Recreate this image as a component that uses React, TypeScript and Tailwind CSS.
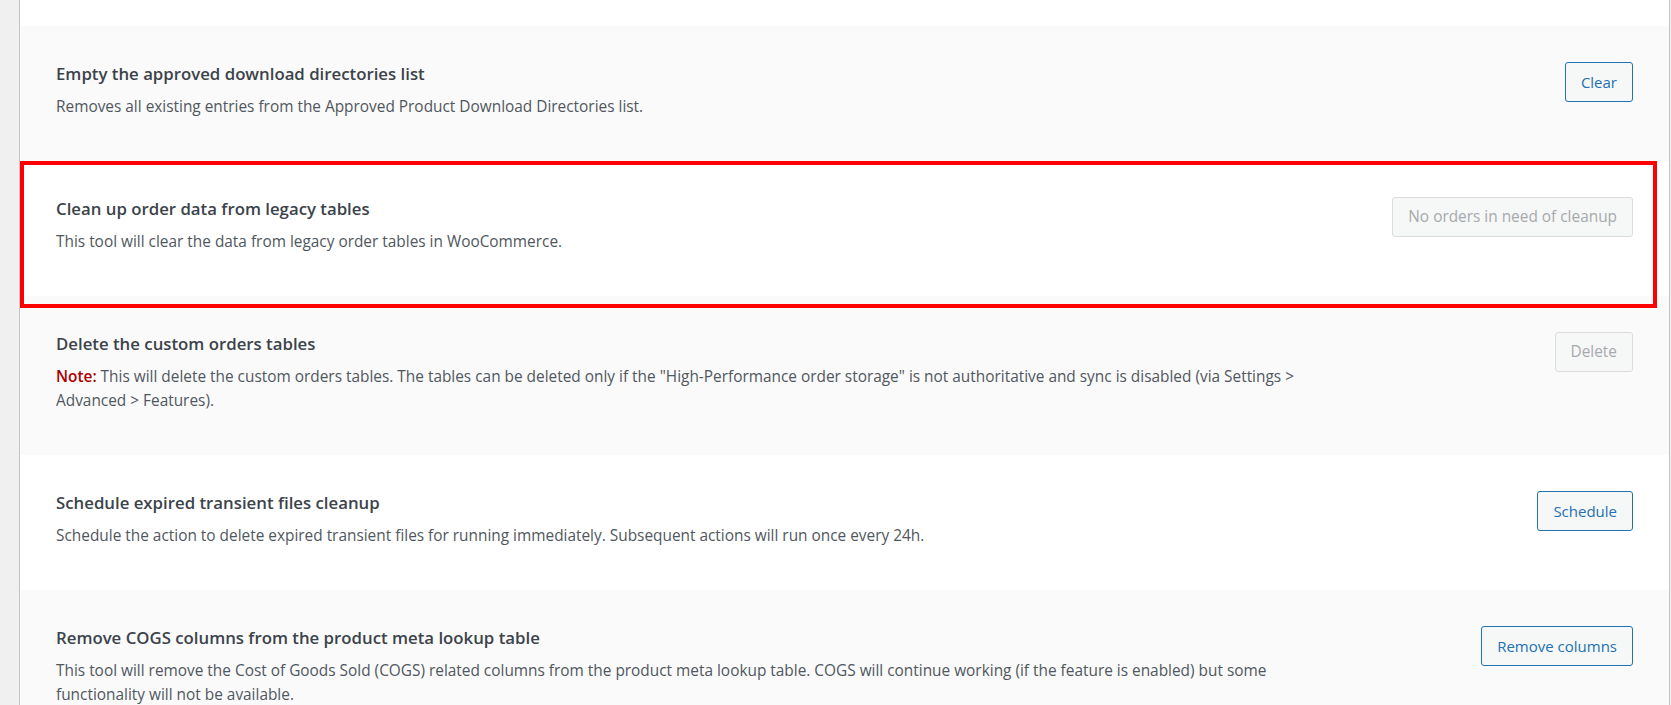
import React from 'react'

type Tool = {
  title: string
  description: React.ReactNode
  button: string
  disabled?: boolean
}

const tools: Tool[] = [
  {
    title: 'Empty the approved download directories list',
    description: 'Removes all existing entries from the Approved Product Download Directories list.',
    button: 'Clear',
  },
  {
    title: 'Clean up order data from legacy tables',
    description: 'This tool will clear the data from legacy order tables in WooCommerce.',
    button: 'No orders in need of cleanup',
    disabled: true,
  },
  {
    title: 'Delete the custom orders tables',
    description: (
      <>
        <span className="font-semibold text-[#a00]">Note:</span> This will delete the custom orders tables. The
        tables can be deleted only if the "High-Performance order storage" is not authoritative and sync is
        disabled (via Settings &gt; Advanced &gt; Features).
      </>
    ),
    button: 'Delete',
    disabled: true,
  },
  {
    title: 'Schedule expired transient files cleanup',
    description:
      'Schedule the action to delete expired transient files for running immediately. Subsequent actions will run once every 24h.',
    button: 'Schedule',
  },
  {
    title: 'Remove COGS columns from the product meta lookup table',
    description:
      'This tool will remove the Cost of Goods Sold (COGS) related columns from the product meta lookup table. COGS will continue working (if the feature is enabled) but some functionality will not be available.',
    button: 'Remove columns',
  },
]

function ToolRow({ tool, striped }: { tool: Tool; striped: boolean }) {
  return (
    <div className={`flex items-start px-[36px] pt-[36px] pb-[42px] ${striped ? 'bg-[#fafafa]' : 'bg-white'}`}>
      <div className="w-[1250px] shrink-0">
        <div className="text-[16.8px] leading-[24px] font-semibold text-[#3c434a]">{tool.title}</div>
        <p className="mt-[9px] text-[15.4px] leading-[24px] text-[#50575e]">{tool.description}</p>
      </div>
      <div className="flex-1 flex justify-end">
        {tool.disabled ? (
          <button
            disabled
            className="h-[40px] px-[15px] rounded-[3px] border border-[#dcdcde] bg-[#f6f7f7] text-[15.4px] text-[#a7aaad] whitespace-nowrap"
          >
            {tool.button}
          </button>
        ) : (
          <button className="h-[40px] px-[15px] rounded-[3px] border border-[#2271b1] bg-[#f6f7f7] text-[15px] text-[#2271b1] whitespace-nowrap">
            {tool.button}
          </button>
        )}
      </div>
    </div>
  )
}

export default function App() {
  return (
    <div
      className="min-h-screen bg-[#f0f0f1] pl-[19px] pr-[1px]"
      style={{ fontFamily: '"Open Sans", "Noto Sans", sans-serif' }}
    >
      <div className="relative border-x border-[#c3c4c7] bg-white">
        <div className="h-[26px] bg-white" />
        {tools.map((tool, i) => (
          <ToolRow key={tool.title} tool={tool} striped={i % 2 === 0} />
        ))}
        {/* annotation around the legacy cleanup row */}
        <div className="absolute left-0 top-[161px] w-[1637px] h-[147px] border-4 border-[#ff0000] pointer-events-none" />
      </div>
    </div>
  )
}
